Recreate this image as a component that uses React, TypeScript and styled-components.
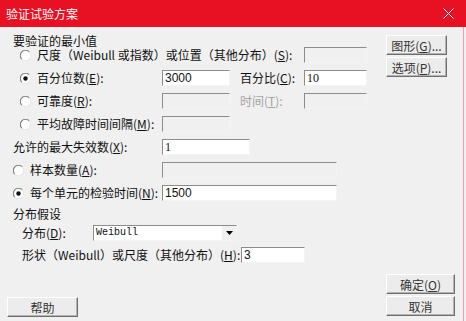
import React from "react";
import styled, { createGlobalStyle } from "styled-components";

const Global = createGlobalStyle`
  html, body { margin: 0; padding: 0; background: #f0f0f0; }
  body { font-family: "Noto Sans CJK SC", sans-serif; font-size: 12px; color: #111; }
  * { box-sizing: border-box; }
`;

const Window = styled.div`
  width: 466px;
  height: 321px;
  display: flex;
  flex-direction: column;
  background: #f0f0f0;
  overflow: hidden;
`;

const TitleBar = styled.div`
  height: 27px;
  flex: none;
  background: #e81123;
  color: #fff;
  display: flex;
  align-items: center;
  padding-left: 6px;
`;

const Title = styled.span`
  flex: 1;
  font-size: 12px;
  line-height: 14px;
`;

const CloseBox = styled.div`
  width: 36px;
  height: 27px;
  display: flex;
  align-items: center;
  justify-content: center;
`;

const Body = styled.div`
  flex: 1;
  min-height: 0;
  display: flex;
  border-right: 1px solid #e6a2aa;
  margin-right: 2px;
`;

const LeftPane = styled.div`
  flex: 1;
  display: flex;
  flex-direction: column;
  padding: 8px 0 4px 7px;
`;

const RightPane = styled.div`
  width: 69px;
  flex: none;
  margin-right: 8px;
  display: flex;
  flex-direction: column;
  gap: 2px;
  padding: 8px 0 5px;
`;

const Spacer = styled.div`
  flex: 1;
`;

const Form = styled.div`
  display: flex;
  flex-direction: column;
  padding-left: 6px;
`;

const GroupTitle = styled.div<{ $mt?: number }>`
  height: 12px;
  line-height: 12px;
  margin-top: ${(p) => p.$mt ?? 0}px;
  white-space: nowrap;
`;

const Row = styled.div<{ $mt?: number }>`
  display: flex;
  align-items: center;
  height: 16px;
  margin-top: ${(p) => p.$mt ?? 7}px;
`;

const Lead = styled.div<{ $w: number; $indent?: number }>`
  width: ${(p) => p.$w}px;
  flex: none;
  display: flex;
  align-items: center;
  gap: 6px;
  padding-left: ${(p) => p.$indent ?? 0}px;
  white-space: nowrap;
  line-height: 14px;
`;

const SubLabel = styled.div<{ $w: number; $disabled?: boolean }>`
  width: ${(p) => p.$w}px;
  flex: none;
  padding-left: 10px;
  white-space: nowrap;
  line-height: 14px;
  color: ${(p) => (p.$disabled ? "#a3a3a3" : "#111")};
`;

const Field = styled.input<{ $w: number; $serif?: boolean }>`
  width: ${(p) => p.$w}px;
  height: 16px;
  flex: none;
  margin: 0;
  padding: 0 2px;
  border: 1px solid;
  border-color: #8c8c8c #f4f4f4 #f4f4f4 #8c8c8c;
  background: #fff;
  font-family: ${(p) => (p.$serif ? '"Liberation Serif", serif' : '"Liberation Sans", sans-serif')};
  font-size: 12px;
  color: #111;
  outline: none;
  &:disabled {
    background: #f0f0f0;
  }
`;

const Combo = styled.div<{ $w: number }>`
  width: ${(p) => p.$w}px;
  height: 16px;
  flex: none;
  display: flex;
  align-items: center;
  border: 1px solid;
  border-color: #8c8c8c #f4f4f4 #f4f4f4 #8c8c8c;
  background: #fff;
`;

const ComboText = styled.span`
  flex: 1;
  padding-left: 2px;
  font-family: "Liberation Mono", monospace;
  font-size: 10px;
  line-height: 14px;
  color: #111;
`;

const ComboArrow = styled.span`
  width: 15px;
  height: 14px;
  display: flex;
  align-items: center;
  justify-content: center;
  background: #f0f0f0;
  border-left: 1px solid #fff;
`;

const Underline = styled.u`
  text-underline-offset: 1px;
`;

const Button = styled.button<{ $w: number }>`
  width: ${(p) => p.$w}px;
  height: 20px;
  flex: none;
  padding: 0;
  background: #ececec;
  font-family: "Noto Sans CJK SC", sans-serif;
  font-size: 12px;
  color: #333;
  border: 1px solid;
  border-color: #ffffff #6e6e6e #6e6e6e #ffffff;
  box-shadow: inset -1px -1px 0 #b4b4b4;
  white-space: nowrap;
`;

const Radio: React.FC<{ checked?: boolean }> = ({ checked }) => (
  <svg width="11" height="11" viewBox="0 0 12 12" style={{ flex: "none" }}>
    <circle cx="6" cy="6" r="5.5" fill="#fff" />
    <path d="M10 2 A5.5 5.5 0 0 0 2 10" fill="none" stroke="#808080" strokeWidth="1.2" />
    <path d="M2 10 A5.5 5.5 0 0 0 10 2" fill="none" stroke="#e6e6e6" strokeWidth="1" />
    {checked && <circle cx="6" cy="6" r="2.4" fill="#111" />}
  </svg>
);

const Key: React.FC<{ k: string }> = ({ k }) => (
  <>
    (<Underline>{k}</Underline>)
  </>
);

export default function App() {
  return (
    <>
      <Global />
      <Window>
        <TitleBar>
          <Title>验证试验方案</Title>
          <CloseBox>
            <svg width="11" height="11" viewBox="0 0 11 11">
              <path d="M0.5 0.5 L10.5 10.5 M10.5 0.5 L0.5 10.5" stroke="#fff" strokeWidth="1" />
            </svg>
          </CloseBox>
        </TitleBar>
        <Body>
          <LeftPane>
            <Form>
              <GroupTitle>要验证的最小值</GroupTitle>
              <Row $mt={0}>
                <Lead $w={291} $indent={7}>
                  <Radio />
                  <span>
                    尺度（Weibull 或指数）或位置（其他分布）<Key k="S" />:
                  </span>
                </Lead>
                <Field $w={63} disabled readOnly value="" />
              </Row>
              <Row>
                <Lead $w={149} $indent={7}>
                  <Radio checked />
                  <span>
                    百分位数<Key k="E" />:
                  </span>
                </Lead>
                <Field $w={68} readOnly value="3000" />
                <SubLabel $w={74}>
                  百分比<Key k="C" />:
                </SubLabel>
                <Field $w={63} $serif readOnly value="10" />
              </Row>
              <Row>
                <Lead $w={149} $indent={7}>
                  <Radio />
                  <span>
                    可靠度<Key k="R" />:
                  </span>
                </Lead>
                <Field $w={68} disabled readOnly value="" />
                <SubLabel $w={74} $disabled>
                  时间<Key k="T" />:
                </SubLabel>
                <Field $w={63} disabled readOnly value="" />
              </Row>
              <Row>
                <Lead $w={149} $indent={7}>
                  <Radio />
                  <span>
                    平均故障时间间隔<Key k="M" />:
                  </span>
                </Lead>
                <Field $w={68} disabled readOnly value="" />
              </Row>
              <Row>
                <Lead $w={149}>
                  <span>
                    允许的最大失效数<Key k="X" />:
                  </span>
                </Lead>
                <Field $w={88} $serif readOnly value="1" />
              </Row>
              <Row>
                <Lead $w={149}>
                  <Radio />
                  <span>
                    样本数量<Key k="A" />:
                  </span>
                </Lead>
                <Field $w={175} disabled readOnly value="" />
              </Row>
              <Row>
                <Lead $w={149}>
                  <Radio checked />
                  <span>
                    每个单元的检验时间<Key k="N" />:
                  </span>
                </Lead>
                <Field $w={175} readOnly value="1500" />
              </Row>
              <GroupTitle $mt={7}>分布假设</GroupTitle>
              <Row $mt={5}>
                <Lead $w={80} $indent={9}>
                  <span>
                    分布<Key k="D" />:
                  </span>
                </Lead>
                <Combo $w={144}>
                  <ComboText>Weibull</ComboText>
                  <ComboArrow>
                    <svg width="7" height="4" viewBox="0 0 7 4">
                      <path d="M0 0 H7 L3.5 4 Z" fill="#000" />
                    </svg>
                  </ComboArrow>
                </Combo>
              </Row>
              <Row $mt={6}>
                <Lead $w={228} $indent={9}>
                  <span>
                    形状（Weibull）或尺度（其他分布）<Key k="H" />:
                  </span>
                </Lead>
                <Field $w={64} readOnly value="3" />
              </Row>
            </Form>
            <Spacer />
            <Button $w={71}>帮助</Button>
          </LeftPane>
          <RightPane>
            <Button $w={61}>图形(<Underline>G</Underline>)...</Button>
            <Button $w={61}>选项(<Underline>P</Underline>)...</Button>
            <Spacer />
            <Button $w={69}>确定(<Underline>O</Underline>)</Button>
            <Button $w={69}>取消</Button>
          </RightPane>
        </Body>
      </Window>
    </>
  );
}
